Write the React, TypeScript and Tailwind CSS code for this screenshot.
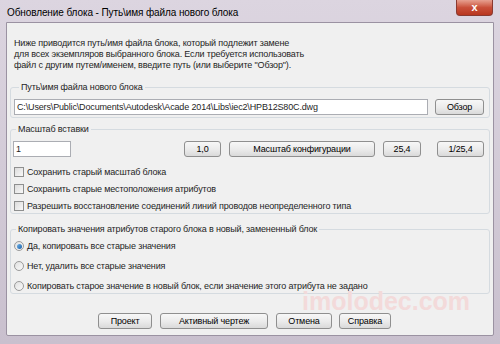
import React from 'react';

const font = { fontFamily: '"Liberation Sans", Arial, sans-serif' };

function Btn({ w, children }: { w: string; children: React.ReactNode }) {
  return (
    <button
      className={`${w} h-[16px] shrink-0 rounded-[3px] border border-[#8f8f8f] bg-gradient-to-b from-[#f7f7f7] via-[#ececec] to-[#dadada] text-[9px] leading-none text-black flex items-center justify-center`}
    >
      {children}
    </button>
  );
}

function Check({ label }: { label: string }) {
  return (
    <div className="h-[14px] flex items-center">
      <span className="ml-[3px] w-[10px] h-[10px] border border-[#8e8f8f] bg-gradient-to-br from-[#dcdcdc] to-[#f8f8f8]" />
      <span className="ml-[3px]">{label}</span>
    </div>
  );
}

function Radio({ label, on }: { label: string; on?: boolean }) {
  return (
    <div className="h-[14px] flex items-center">
      <span className="ml-[3px] w-[10px] h-[10px] rounded-full border border-[#9a9a9a] bg-gradient-to-br from-[#e0e0e0] to-[#fafafa] flex items-center justify-center">
        {on && <span className="w-[5px] h-[5px] rounded-full bg-gradient-to-br from-[#6fb3e8] to-[#1b5fa8]" />}
      </span>
      <span className="ml-[3px]">{label}</span>
    </div>
  );
}

export default function App() {
  return (
    <div
      className="w-[500px] h-[344px] overflow-hidden bg-gradient-to-b from-[#dcd5e0] to-[#c9c0ce] flex flex-col text-[9px] leading-[11px] tracking-[-0.15px] text-[#1e1e1e]"
      style={font}
    >
      {/* title bar */}
      <div className="h-[22px] shrink-0 flex items-start justify-between">
        <div className="pl-[7px] pt-[6px] text-[10px] leading-[13px] tracking-[-0.1px] text-black">
          Обновление блока - Путь\имя файла нового блока
        </div>
        <div className="mr-[7px] w-[37px] h-[16px] rounded-b-[4px] border border-[#8a3a30] border-t-0 bg-gradient-to-b from-[#e6a090] via-[#c9503a] to-[#b8361f] flex items-center justify-center text-white text-[11px] font-bold leading-none">
          x
        </div>
      </div>

      {/* client */}
      <div className="relative mx-[6px] h-[314px] shrink-0 bg-[#f0f0f0] border border-[#9b92a2] rounded-b-[2px]">
        <div className="pt-[15px] pl-[7px]">
          Ниже приводится путь/имя файла блока, который подлежит замене
          <br />
          для всех экземпляров выбранного блока. Если требуется использовать
          <br />
          файл с другим путем/именем, введите путь (или выберите "Обзор").
        </div>

        <fieldset className="mt-[10px] mx-[3px] border border-[#d5dbe0] rounded-[3px] pl-[3px] pr-[4px] pb-[2px]">
          <legend className="ml-[5px] px-[2px] leading-[12px]">Путь\имя файла нового блока</legend>
          <div className="pt-[6px] flex items-center">
            <div className="w-[414px] h-[16px] bg-white border border-[#abadb3] px-[2px] flex items-center">
              C:\Users\Public\Documents\Autodesk\Acade 2014\Libs\iec2\HPB12S80C.dwg
            </div>
            <div className="ml-[7px]">
              <Btn w="w-[49px]">Обзор</Btn>
            </div>
          </div>
        </fieldset>

        <fieldset className="mt-[5px] mx-[3px] border border-[#d5dbe0] rounded-[3px]">
          <legend className="ml-[5px] px-[2px] leading-[12px]">Масштаб вставки</legend>
          <div className="pt-[6px] h-[22px] flex items-end">
            <div className="ml-[2px] w-[58px] h-[16px] bg-white border border-[#abadb3] px-[2px] flex items-center">1</div>
            <div className="ml-[113px] flex">
              <Btn w="w-[37px]">1,0</Btn>
              <div className="ml-[8px]"><Btn w="w-[146px]">Масштаб конфигурации</Btn></div>
              <div className="ml-[8px]"><Btn w="w-[38px]">25,4</Btn></div>
              <div className="ml-[16px]"><Btn w="w-[47px]">1/25,4</Btn></div>
            </div>
          </div>
          <div className="mt-[8px] flex flex-col gap-[3px]">
            <Check label="Сохранить старый масштаб блока" />
            <Check label="Сохранить старые местоположения атрибутов" />
            <Check label="Разрешить восстановление соединений линий проводов неопределенного типа" />
          </div>
        </fieldset>

        <fieldset className="mt-[9px] mx-[3px] border border-[#d5dbe0] rounded-[3px]">
          <legend className="ml-[5px] px-[2px] leading-[12px]">
            Копировать значения атрибутов старого блока в новый, замененный блок
          </legend>
          <div className="pt-[4px] flex flex-col gap-[6px]">
            <Radio on label="Да, копировать все старые значения" />
            <Radio label="Нет, удалить все старые значения" />
            <Radio label="Копировать старое значение в новый блок, если значение этого атрибута не задано" />
          </div>
        </fieldset>

        <div className="mt-[19px] pl-[91px] flex">
          <Btn w="w-[54px]">Проект</Btn>
          <div className="ml-[8px]"><Btn w="w-[108px]">Активный чертеж</Btn></div>
          <div className="ml-[8px]"><Btn w="w-[56px]">Отмена</Btn></div>
          <div className="ml-[7px]"><Btn w="w-[52px]">Справка</Btn></div>
        </div>

        <div className="absolute left-[295px] top-[266px] text-[25px] leading-none font-bold tracking-normal text-[#f3dada] pointer-events-none">
          imolodec.com
        </div>
      </div>
    </div>
  );
}
